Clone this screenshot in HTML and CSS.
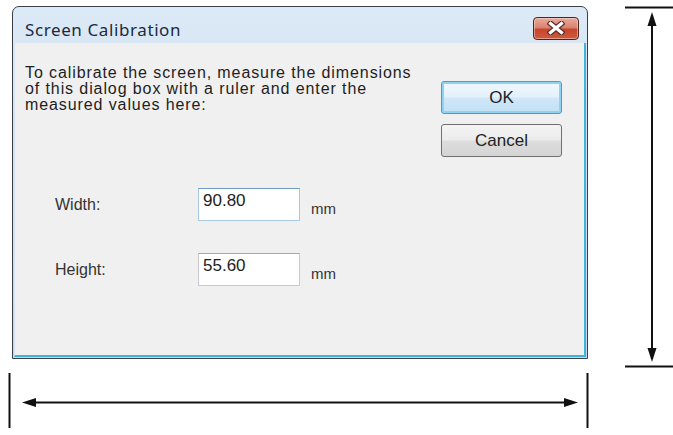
FILE: index.html
```html
<!DOCTYPE html>
<html lang="en">
<head>
<meta charset="utf-8">
<title>Screen Calibration</title>
<link rel="stylesheet" href="styles.css">
</head>
<body>
<div class="sheet">
  <div class="dialog">
    <div class="titlebar">
      <span class="title">Screen Calibration</span>
      <button class="close" aria-label="Close">
        <svg width="18" height="14" viewBox="0 0 18 14">
          <path d="M3.5 2.5 L14.5 11.5 M14.5 2.5 L3.5 11.5" stroke="#5a2a24" stroke-width="5.5" stroke-linecap="square"/>
          <path d="M3.5 2.5 L14.5 11.5 M14.5 2.5 L3.5 11.5" stroke="#ffffff" stroke-width="3.2" stroke-linecap="square"/>
        </svg>
      </button>
    </div>
    <div class="client">
      <div class="top">
        <p class="intro">To calibrate the screen, measure the dimensions<br>of this dialog box with a ruler and enter the<br>measured values here:</p>
        <div class="buttons">
          <button class="btn btn-default">OK</button>
          <button class="btn">Cancel</button>
        </div>
      </div>
      <div class="form">
        <label class="label" for="w">Width:</label>
        <input class="field field-focus" id="w" value="90.80">
        <span class="unit">mm</span>
        <label class="label" for="h">Height:</label>
        <input class="field" id="h" value="55.60">
        <span class="unit">mm</span>
      </div>
    </div>
  </div>

  <svg class="dim-v" width="48" height="372" viewBox="0 0 48 372">
    <line x1="0" y1="7.5" x2="48" y2="7.5" stroke="#111" stroke-width="2"/>
    <line x1="0" y1="366.5" x2="48" y2="366.5" stroke="#111" stroke-width="2"/>
    <line x1="27" y1="20" x2="27" y2="354" stroke="#111" stroke-width="2"/>
    <polygon points="27,12 22.5,26 31.5,26" fill="#111"/>
    <polygon points="27,362 22.5,348 31.5,348" fill="#111"/>
  </svg>

  <svg class="dim-h" width="590" height="63" viewBox="0 0 590 63">
    <line x1="9.5" y1="3" x2="9.5" y2="58" stroke="#111" stroke-width="2"/>
    <line x1="587.5" y1="3" x2="587.5" y2="58" stroke="#111" stroke-width="2"/>
    <line x1="30" y1="32.5" x2="568" y2="32.5" stroke="#111" stroke-width="2"/>
    <polygon points="22,32.5 36,28 36,37" fill="#111"/>
    <polygon points="578,32.5 564,28 564,37" fill="#111"/>
  </svg>
</div>
</body>
</html>
```

FILE: styles.css
```css
html, body {
  margin: 0;
  background: #ffffff;
}

.sheet {
  display: grid;
  grid-template-columns: 588px 37px 48px;
  grid-template-rows: 372px 63px;
  width: 673px;
  height: 435px;
  overflow: hidden;
}

/* window frame */
.dialog {
  grid-column: 1;
  grid-row: 1;
  margin: 6px 0 0 12px;
  height: 353px;
  box-sizing: border-box;
  border: 1px solid #3b3f45;
  border-radius: 7px 7px 0 0;
  background: linear-gradient(#dce9f6, #c4d8ee);
  display: flex;
  flex-direction: column;
  padding: 0 1px 1px 1px;
}

.titlebar {
  height: 36px;
  flex: none;
  display: flex;
  align-items: center;
  justify-content: space-between;
  padding: 0 7px 0 11px;
}

.title {
  font-family: "Noto Sans", "Open Sans", sans-serif;
  font-size: 17px;
  letter-spacing: 0.6px;
  color: #1a2a40;
  margin-top: 8px;
}

.close {
  width: 46px;
  height: 23px;
  margin-top: 6px;
  padding: 0;
  border: 1px solid #4a2620;
  border-radius: 4px;
  background: linear-gradient(#e9ab9c 0%, #d98471 45%, #c5452d 55%, #cf5a3e 100%);
  box-shadow: inset 0 0 0 1px rgba(255, 220, 210, 0.5);
  display: flex;
  align-items: center;
  justify-content: center;
}

/* dialog body */
.client {
  flex: 1;
  background: #f0f0f0;
  border-left: 1px solid #d4e3f3;
  border-right: 2px solid #3fb3dc;
  border-bottom: 2px solid #3fb3dc;
  display: flex;
  flex-direction: column;
  font-family: "Liberation Sans", Arial, sans-serif;
  color: #222;
}

.top {
  display: flex;
  justify-content: space-between;
  padding: 22px 22px 0 10px;
}

.intro {
  margin: 0;
  font-size: 16px;
  line-height: 16px;
  letter-spacing: 0.9px;
  color: #1e1e1e;
}

.buttons {
  display: flex;
  flex-direction: column;
  gap: 10px;
  margin-top: 16px;
}

.btn {
  width: 121px;
  height: 33px;
  border: 1px solid #707070;
  border-radius: 3px;
  background: linear-gradient(#f4f4f4 0%, #ebebeb 48%, #dddddd 52%, #d4d4d4 100%);
  font-family: "Liberation Sans", Arial, sans-serif;
  font-size: 17px;
  color: #222;
  padding: 0;
}

.btn-default {
  border-color: #3c9fd6;
  box-shadow: inset 0 0 0 2px #8fd3f3;
  background: linear-gradient(#f1f8fd 0%, #e3f1fb 48%, #cfe7f8 52%, #c2e0f6 100%);
}

.form {
  display: grid;
  grid-template-columns: 143px 102px auto;
  row-gap: 32px;
  align-items: center;
  padding-left: 40px;
  margin-top: 31px;
}

.label {
  font-size: 16px;
  color: #333;
}

.field {
  width: 102px;
  height: 33px;
  box-sizing: border-box;
  border: 1px solid #c8ccd2;
  border-top-color: #a3a7ad;
  background: #ffffff;
  font-family: "Liberation Sans", Arial, sans-serif;
  font-size: 17px;
  color: #222;
  padding: 0 4px 8px;
  outline: none;
}

.field-focus {
  border-color: #a8c8e4;
  border-top-color: #6f9cc6;
}

.unit {
  font-size: 15px;
  color: #333;
  margin-left: 11px;
  margin-top: 8px;
}

.dim-v {
  grid-column: 3;
  grid-row: 1;
  display: block;
}

.dim-h {
  grid-column: 1;
  grid-row: 2;
  display: block;
  margin-top: -2px;
}
```
